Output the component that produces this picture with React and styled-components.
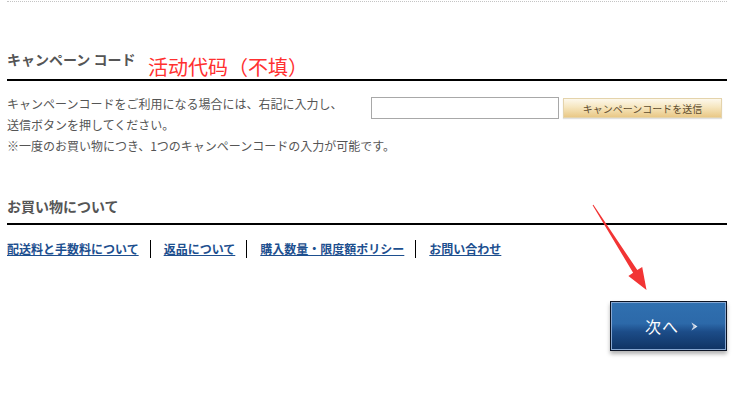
import React from 'react';
import styled, { createGlobalStyle } from 'styled-components';

const textGrey = '#555';
const linkBlue = '#1d4f8f';
const jpFont = '"Noto Sans CJK JP", "Noto Sans", sans-serif';

const GlobalStyle = createGlobalStyle`
  body {
    margin: 0;
    background: #fff;
    font-family: ${jpFont};
  }
`;

const Page = styled.div`
  position: relative;
  width: 733px;
  height: 413px;
  box-sizing: border-box;
  padding: 0 6px 0 7px;
  overflow: hidden;
`;

const TopRule = styled.div`
  margin-top: 1px;
  border-top: 1px dotted #c4c4c4;
`;

const SectionTitle = styled.h2`
  position: relative;
  margin: ${props => props.top}px 0 0;
  padding-bottom: ${props => props.pad}px;
  border-bottom: 2px solid #000;
  font-size: 14px;
  line-height: 20px;
  font-weight: bold;
  color: ${textGrey};
`;

const Note = styled.span`
  position: absolute;
  left: 141px;
  top: 6px;
  font-family: "Noto Sans CJK SC", sans-serif;
  font-size: 20px;
  line-height: 24px;
  font-weight: 400;
  color: #ff3030;
`;

const CampaignRow = styled.div`
  display: flex;
  margin-top: 12px;
`;

const Lead = styled.p`
  flex: 0 0 364px;
  width: 364px;
  min-width: 0;
  margin: 0;
  font-size: 12px;
  line-height: 21px;
  color: ${textGrey};
  white-space: nowrap;
`;

const CodeForm = styled.div`
  display: flex;
  align-items: center;
  gap: 4px;
  margin-top: 4px;
  height: 22px;
`;

const CodeInput = styled.input`
  width: 188px;
  height: 22px;
  box-sizing: border-box;
  border: 1px solid #a8a8a8;
  padding: 0 4px;
  margin: 0;
`;

const SendButton = styled.button`
  width: 159px;
  height: 20px;
  margin: 0;
  padding: 0;
  border: 1px solid #e4d3ab;
  background: linear-gradient(#fdf8ec 0%, #f6e6bf 45%, #e9c886 100%);
  font-family: ${jpFont};
  font-size: 10px;
  color: #5e4c2e;
  box-shadow: 0 1px 1px rgba(0, 0, 0, 0.12);
`;

const LinkList = styled.ul`
  display: flex;
  list-style: none;
  margin: 15px 0 0;
  padding: 0;
`;

const LinkItem = styled.li`
  font-size: 12px;
  line-height: 18px;
  font-weight: bold;
  & + & {
    margin-left: 11px;
    padding-left: 13px;
    border-left: 1px solid #000;
  }
  a {
    color: ${linkBlue};
    text-decoration: underline;
  }
`;

const NextRow = styled.div`
  display: flex;
  justify-content: flex-end;
  margin-top: 43px;
`;

const NextButton = styled.button`
  display: flex;
  align-items: center;
  justify-content: center;
  gap: 12px;
  width: 117px;
  height: 50px;
  margin: 0;
  padding: 0 0 0 6px;
  border: 1px solid #0c1424;
  outline: 1px solid #86a7d2;
  outline-offset: -2px;
  background: linear-gradient(#3070b0 0%, #2c69a9 45%, #1c4c88 62%, #0f3363 100%);
  box-shadow: 0 3px 4px rgba(0, 0, 0, 0.3);
  font-family: ${jpFont};
  font-size: 16px;
  color: #fff;
  letter-spacing: 1px;
`;

const Arrow = () => (
  <svg width="7" height="9" viewBox="0 0 7 9">
    <path d="M0.5 0.5 L6.5 4.5 L0.5 8.5 L2.5 4.5 Z" fill="#e2e8f1" />
    <path d="M2.5 4.5 L0.5 0.5 L4 4.5 L0.5 8.5 Z" fill="#9fb3cf" />
  </svg>
);

const Overlay = styled.svg`
  position: absolute;
  left: 0;
  top: 0;
  pointer-events: none;
`;

const RedArrow = () => (
  <Overlay width="733" height="413">
    <polygon
      points="592.6,205.3 633.1,272.7 628.4,275.9 646.5,290 642.2,267.1 637.3,270.1 593.4,204.7"
      fill="#f23434"
    />
  </Overlay>
);

const links = ['配送料と手数料について', '返品について', '購入数量・限度額ポリシー', 'お問い合わせ'];

const App = () => (
  <>
    <GlobalStyle />
    <Page>
      <TopRule />
      <SectionTitle top={47} pad={10}>
        キャンペーン コード
        <Note>活动代码（不填）</Note>
      </SectionTitle>
      <CampaignRow>
        <Lead>
          キャンペーンコードをご利用になる場合には、右記に入力し、<br />
          送信ボタンを押してください。<br />
          ※一度のお買い物につき、1つのキャンペーンコードの入力が可能です。
        </Lead>
        <CodeForm>
          <CodeInput type="text" />
          <SendButton>キャンペーンコードを送信</SendButton>
        </CodeForm>
      </CampaignRow>
      <SectionTitle top={40} pad={7}>お買い物について</SectionTitle>
      <LinkList>
        {links.map(text => (
          <LinkItem key={text}><a href="#">{text}</a></LinkItem>
        ))}
      </LinkList>
      <NextRow>
        <NextButton>次へ <Arrow /></NextButton>
      </NextRow>
      <RedArrow />
    </Page>
  </>
);

export default App;
